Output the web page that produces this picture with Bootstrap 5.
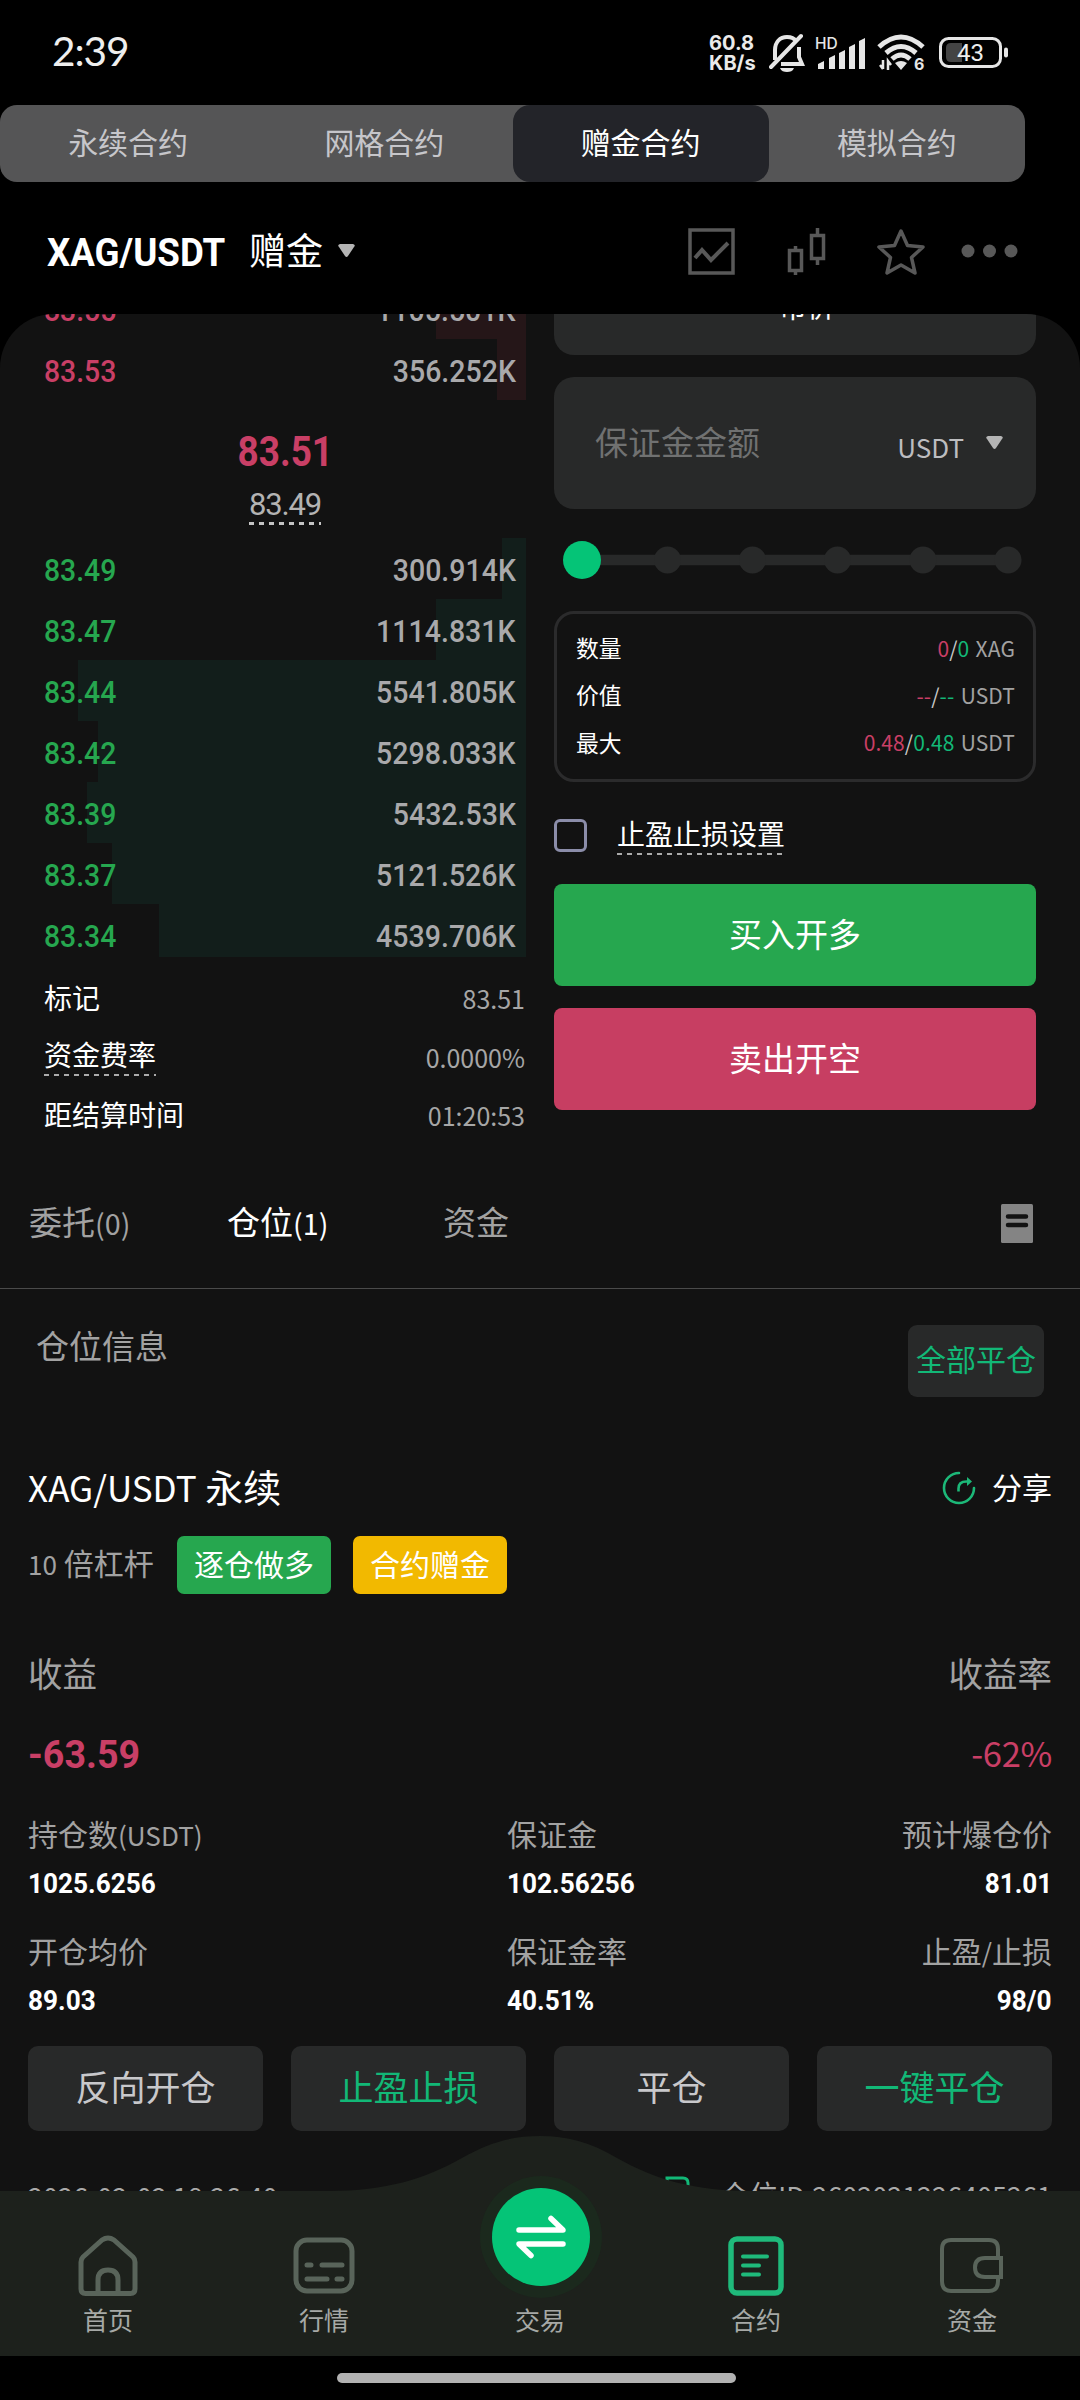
<!DOCTYPE html>
<html lang="zh-CN" data-bs-theme="dark">
<head>
<meta charset="utf-8">
<meta name="viewport" content="width=device-width, initial-scale=1">
<title>XAG/USDT 赠金合约</title>
<link href="https://cdn.jsdelivr.net/npm/bootstrap@5.3.0/dist/css/bootstrap.min.css" rel="stylesheet">
<style>
  :root{--up:#26a74f;--brand:#12b877;--down:#c93f66;--panel:#121212;--field:#282929;--muted:#a2a2a2}
  body{width:1080px;height:2400px;margin:0;background:#000;color:#fff;overflow:hidden;
    font-family:"Noto Sans CJK SC",sans-serif;line-height:1;position:relative}
  svg{display:block;flex:none}
  .din{font-family:Roboto,"Liberation Sans",sans-serif;display:inline-block}
  .lt{font-size:.87em}
  .t-up{color:var(--up)} .t-brand{color:var(--brand)} .t-down{color:var(--down)} .t-muted{color:var(--muted)}
  .statusbar{height:105px;padding:0 71px 0 52px}
  .clock{font:400 40.500px/1 Lato,sans-serif;color:#eee;letter-spacing:-1px;padding-bottom:2px}
  .rate{font:700 20px/20px Inter,sans-serif;color:#eaeaea;width:50px;margin-right:10px;white-space:nowrap}
  .seg{width:1025px;height:77px;border-radius:17px;background:#555556;overflow:hidden}
  .seg .nav-link{padding:0 0 6px;border-radius:17px;font-size:30px;color:#c6c6ca;height:77px;display:flex;align-items:center;justify-content:center}
  .seg .nav-link.active{background:#232429;color:#fff}
  .pairbar{height:132px;padding:6px 61px 0 47px}
  .pair{font-size:38px;font-weight:700;width:202px}
  .pair i{font-style:normal;transform:scaleX(.965);transform-origin:left}
  .kind{font-size:37px;width:77px;height:48px;line-height:45px}
  .main{height:2042px;background:var(--panel);border-radius:54px 54px 0 0;overflow:hidden}
  .book{width:482px;margin:-36px 0 0 44px}
  .lv{height:61px;padding:4px 10px 0 0;font-size:31px;font-weight:500;background:linear-gradient(var(--tint),var(--tint)) right/var(--w) 100% no-repeat}
  .lv.cut{height:53px;padding-top:13px}
  .ask{--tint:#251618} .bid{--tint:#121e1b}
  .lv .din{line-height:36px}
  .lv .din:first-child{transform:scaleX(.915);transform-origin:left}
  .lv .din:last-child{transform:scaleX(.92);transform-origin:right;color:#a9a9ab}
  .mid{height:138px;padding-top:31px}
  .last{font-size:42px;font-weight:700;line-height:42px;transform:scaleX(.88)}
  .markp{font-size:31px;line-height:31px;color:#b3b3b3;margin-top:16px;width:72px;height:36px;letter-spacing:-1.2px;
    background:repeating-linear-gradient(90deg,#c4c4c4 0 5px,transparent 5px 10px) bottom/100% 3px no-repeat}
  .stats{padding-top:11px}
  .stats>div{height:58.5px;font-size:28px;padding:0 1px 0 0}
  .stats b{font-weight:400;line-height:54px}
  .stats b.dash{line-height:44px;margin-top:-3px}
  .stats span{font-size:25px;color:#a6a6a6;margin-top:3px}
  .dash{background:repeating-linear-gradient(90deg,#aaa 0 5px,transparent 5px 10px) left bottom/100% 2px no-repeat}
  .order{width:482px;margin-left:28px}
  .field{background:var(--field);border-radius:20px}
  .f1{height:98px;margin-top:-57px;font-size:28px}
  .f2{height:132px;margin-top:22px;padding:0 33px 0 41px}
  .slide{margin:31px 0 31px 9px}
  .calc{height:171px;border:3px solid #2b2b2c;border-radius:20px;padding:11px 18px 0 19px}
  .calc>div{height:47.2px;font-size:22.800px}
  .calc b{font-weight:400}
  .calc span{font-size:21px;letter-spacing:.1px}
  .calc .val{color:#c9c9c9;word-spacing:1.500px}
  .calc .unit{color:#a2a2a2}
  .tp{height:102px;padding-top:4px}
  .box{width:33px;height:33px;border:3px solid #8b8da9;border-radius:6px}
  .tplabel{font-size:28px;width:166px;height:40px;line-height:37px;margin-left:30px;white-space:nowrap}
  .act{height:102px;border-radius:8px;border:0;color:#fff;font-size:33px;padding:0 0 4px;line-height:1}
  .buy{background:var(--up)} .sell{background:#c73e62;margin-top:22px}
  .tabs{height:130px;padding:0 47px 0 29px;border-bottom:1px solid #4a4a4a;margin-top:15px;font-size:33px;color:var(--muted)}
  .tabs div{padding-bottom:4px}
  .info{height:142px;padding:0 36px 0 36px}
  .closeall{width:136px;height:72px;margin-top:36px;border-radius:9px;background:var(--field);font-size:30px;padding-bottom:5px}
  .pos{padding:0 28px}
  .tag{height:58px;width:154px;border-radius:7px;font-size:30px;padding-bottom:4px;color:#fff}
  .metrics{height:117px}
  .cell.c1{width:479px} .cell.c2{width:265px} .cell.c3{flex:1}
  .cell div:first-child{font-size:30px;height:44px;line-height:44px;color:var(--muted)}
  .cell .num{display:block;width:max-content;font-size:28px;font-weight:700;line-height:44px;margin-top:7px;transform:scaleX(.935);transform-origin:left}
  .cell.c3 .num{margin-left:auto;transform-origin:right}
  .ops{gap:28px;margin-top:1px}
  .ops .btn{flex:1;height:85px;border:0;border-radius:10px;background:var(--field);font-size:35px;padding:0 0 6px;line-height:1;color:#c8c8cb}
  .ops .btn.g{color:var(--brand)}
  .meta{margin-top:48px;font-size:27px;color:#aaa;height:40px}
  .dock{position:absolute;left:0;top:2136px;width:1080px;height:264px}
  .dock .back{position:absolute;inset:0}
  .dockrow{position:relative;height:220px}
  .dockitem{width:216px;height:220px;display:flex;flex-direction:column;align-items:center;justify-content:flex-end;font-size:25px;color:#a6a9a6}
  .dockitem div{height:50px;line-height:26px}
  .bar{position:absolute;left:337px;top:237px;width:399px;height:10px;border-radius:5px;background:#b2b2b2}
</style>
<script src="https://cdn.jsdelivr.net/npm/bootstrap@5.3.0/dist/js/bootstrap.bundle.min.js"></script>
</head>
<body>
<div class="statusbar d-flex justify-content-between align-items-center">
  <div class="clock">2:39</div>
  <div class="d-flex align-items-center">
    <div class="rate"><div>60.8</div><div>KB/s</div></div>
    <svg width="36" height="40" viewBox="0 0 36 40" fill="none" stroke="#e6e6e6" stroke-width="4"><path d="M6 27V17C6 9 11 4 18 4c4 0 7 1 9 4M30 14v10l3 7H12"/><path d="M2 34L32 3" stroke-linecap="round"/><path d="M11 35h14c-1 3-4 4-7 4s-6-1-7-4z" fill="#e6e6e6" stroke="none"/></svg>
    <svg style="margin-left:10px" width="54" height="34" viewBox="0 0 54 34" fill="#e6e6e6"><text x="0" y="13" font-family="Inter" font-weight="500" font-size="15.500">HD</text><path d="M3 28l6-3v8H3zM14 22l6-3v14h-6zM24 17l6-3v19h-6zM34 11l6-3v25h-6zM44 5l6-3v31h-6z"/></svg>
    <svg style="margin-left:8px" width="48" height="38" viewBox="0 0 48 38" fill="none" stroke="#e6e6e6" stroke-width="5"><path d="M2 13Q24-7 46 13M9 19Q24 6 39 19M15 25Q24 17 33 25"/><path d="M18 29q6-4 12 0l-6 7z" fill="#e6e6e6" stroke="none"/><path d="M6 26v9M3 31l3 4M11 36V27l3 4" stroke-width="2.500"/><text x="37" y="36" font-family="Inter" font-weight="700" font-size="16" fill="#e6e6e6" stroke="none">6</text></svg>
    <svg style="margin-left:14px" width="70" height="32" viewBox="0 0 70 32"><rect x="1.500" y="1.500" width="60" height="28" rx="8" fill="none" stroke="#e6e6e6" stroke-width="3"/><path d="M12 6h11v19H12q-5 0-5-5v-9q0-5 5-5z" fill="#444"/><rect x="65" y="10.500" width="4" height="10" rx="2" fill="#e6e6e6"/><text x="18" y="24" font-family="Roboto" font-weight="400" font-size="24" fill="#eee">43</text></svg>
  </div>
</div>

<nav class="seg nav nav-pills nav-fill flex-nowrap">
  <a class="nav-link nav-item w-25">永续合约</a><a class="nav-link nav-item w-25">网格合约</a><a class="nav-link nav-item w-25 active">赠金合约</a><a class="nav-link nav-item w-25">模拟合约</a>
</nav>

<div class="pairbar d-flex align-items-center">
  <div class="pair"><i class="din">XAG/USDT</i></div>
  <div class="kind">赠金</div>
  <svg style="margin-left:12px" width="17" height="14" viewBox="0 0 17 14"><path d="M2 0h13q3 1 1 3L10 12q-1.500 2-3 0L1 3Q-1 1 2 0z" fill="#b4b4b4"/></svg>
  <div class="d-flex align-items-center ms-auto">
    <svg width="47" height="47" viewBox="0 0 47 47" fill="none" stroke="#585858" stroke-width="3.500"><path d="M2 2h43v43H2z"/><path d="M7 30l7-8 9 10 17-17" stroke-width="4"/></svg>
    <svg style="margin-left:52px" width="39" height="47" viewBox="0 0 39 47" fill="none" stroke="#585858" stroke-width="3.500"><path d="M2.500 22.500h12v20h-12zM8.500 18v4M8.500 43v4M24.500 7.500h12v23h-12zM30.500 0v7M30.500 31v6"/></svg>
    <svg style="margin-left:51px" width="48" height="47" viewBox="0 0 48 47" fill="none" stroke="#585858" stroke-width="3.500" stroke-linejoin="round"><path d="M24 3l6.500 14.500L46 19 34.500 29.500 38 45 24 37 10 45l3.500-15.500L2 19l15.500-1.500z"/></svg>
    <svg style="margin-left:36px" width="58" height="14" viewBox="0 0 58 14" fill="#585858"><circle cx="7" cy="7" r="6.500"/><circle cx="28.500" cy="7" r="6.500"/><circle cx="50" cy="7" r="6.500"/></svg>
  </div>
</div>

<main class="main">
  <div class="d-flex">
    <section class="book">
      <div class="lv ask d-flex justify-content-between align-items-center" style="--w:90px"><span class="din t-down">83.55</span><span class="din">1105.501K</span></div>
      <div class="lv ask d-flex justify-content-between align-items-center" style="--w:29px"><span class="din t-down">83.53</span><span class="din">356.252K</span></div>
      <div class="mid d-flex flex-column align-items-center">
        <div class="last din t-down">83.51</div>
        <div class="markp din">83.49</div>
      </div>
      <div class="lv bid d-flex justify-content-between align-items-center" style="--w:24px"><span class="din t-up">83.49</span><span class="din">300.914K</span></div>
      <div class="lv bid d-flex justify-content-between align-items-center" style="--w:90px"><span class="din t-up">83.47</span><span class="din">1114.831K</span></div>
      <div class="lv bid d-flex justify-content-between align-items-center" style="--w:448px"><span class="din t-up">83.44</span><span class="din">5541.805K</span></div>
      <div class="lv bid d-flex justify-content-between align-items-center" style="--w:428px"><span class="din t-up">83.42</span><span class="din">5298.033K</span></div>
      <div class="lv bid d-flex justify-content-between align-items-center" style="--w:439px"><span class="din t-up">83.39</span><span class="din">5432.53K</span></div>
      <div class="lv bid d-flex justify-content-between align-items-center" style="--w:414px"><span class="din t-up">83.37</span><span class="din">5121.526K</span></div>
      <div class="lv bid cut d-flex justify-content-between align-items-center" style="--w:367px"><span class="din t-up">83.34</span><span class="din">4539.706K</span></div>
      <div class="stats">
        <div class="d-flex justify-content-between align-items-center"><b>标记</b><span>83.51</span></div>
        <div class="d-flex justify-content-between align-items-center"><b class="dash">资金费率</b><span>0.0000%</span></div>
        <div class="d-flex justify-content-between align-items-center"><b>距结算时间</b><span>01:20:53</span></div>
      </div>
    </section>

    <section class="order">
      <div class="field f1 d-flex align-items-center justify-content-center ps-4">市价</div>
      <div class="field f2 d-flex align-items-center">
        <div style="font-size:33px;color:#707171;padding-bottom:3px">保证金金额</div>
        <div class="ms-auto" style="font-size:26px;color:#bdbdc0;padding-top:7px">USDT</div>
        <svg style="margin-left:22px" width="17" height="14" viewBox="0 0 17 14"><path d="M2 0h13q3 1 1 3L10 12q-1.500 2-3 0L1 3Q-1 1 2 0z" fill="#b4b4b4"/></svg>
      </div>
      <svg class="slide" width="464" height="40" viewBox="0 0 464 40"><path d="M19 20H445" stroke="#282929" stroke-width="10.500"/><g fill="#282929"><circle cx="104.500" cy="20" r="13.500"/><circle cx="189.500" cy="20" r="13.500"/><circle cx="274.500" cy="20" r="13.500"/><circle cx="360" cy="20" r="13.500"/><circle cx="445" cy="20" r="13.500"/></g><circle cx="19" cy="20" r="19" fill="#05c477"/></svg>
      <div class="calc">
        <div class="d-flex justify-content-between align-items-center"><b>数量</b><span class="val"><span class="t-down">0</span>/<span class="t-brand">0</span> <span class="unit">XAG</span></span></div>
        <div class="d-flex justify-content-between align-items-center"><b>价值</b><span class="val"><span class="t-down">--</span>/<span class="t-brand">--</span> <span class="unit">USDT</span></span></div>
        <div class="d-flex justify-content-between align-items-center"><b>最大</b><span class="val"><span class="t-down">0.48</span>/<span class="t-brand">0.48</span> <span class="unit">USDT</span></span></div>
      </div>
      <div class="tp d-flex align-items-center"><div class="box"></div><div class="tplabel dash">止盈止损设置</div></div>
      <button class="btn act buy w-100 d-block">买入开多</button>
      <button class="btn act sell w-100 d-block">卖出开空</button>
    </section>
  </div>

  <div class="tabs d-flex align-items-center">
    <div style="width:198px">委托<span class="lt">(0)</span></div>
    <div class="text-white" style="width:216px">仓位<span class="lt">(1)</span></div>
    <div>资金</div>
    <svg class="ms-auto" width="32" height="39" viewBox="0 0 32 39"><rect width="32" height="39" rx="1.500" fill="#848484"/><path d="M7 12.500h18M7 21h18" stroke="#121212" stroke-width="4.500" stroke-linecap="round"/></svg>
  </div>

  <div class="info d-flex justify-content-between">
    <div class="t-muted" style="font-size:33px;padding-top:40px">仓位信息</div>
    <div class="closeall t-brand d-flex align-items-center justify-content-center">全部平仓</div>
  </div>

  <section class="pos">
    <div class="d-flex align-items-center" style="height:105px;padding-top:10px">
      <div style="font-size:38px;padding-bottom:4px"><span style="font-size:35px">XAG/USDT</span> 永续</div>
      <svg class="ms-auto" width="34" height="34" viewBox="0 0 34 34" fill="none" stroke="#1cb878" stroke-width="2.600"><path d="M17 2A15 15 0 1 0 32 17" stroke-linecap="round"/><path d="M16.500 20.500v-3q0-7 8-7h2"/><path d="M25 6l5 4.500-5 4.500z" fill="#1cb878" stroke="none"/></svg>
      <div style="font-size:30px;margin-left:16px;padding-bottom:4px">分享</div>
    </div>
    <div class="d-flex align-items-center" style="height:58px">
      <div class="t-muted" style="font-size:30px;padding-bottom:4px;width:149px"><span class="lt">10</span> 倍杠杆</div>
      <div class="tag d-flex align-items-center justify-content-center" style="background:var(--up)">逐仓做多</div>
      <div class="tag d-flex align-items-center justify-content-center" style="background:#f2b900;margin-left:22px">合约赠金</div>
    </div>
    <div class="d-flex justify-content-between t-muted" style="font-size:34.500px;padding-top:61px"><div>收益</div><div>收益率</div></div>
    <div class="d-flex justify-content-between align-items-center t-down" style="height:60px;margin-top:36px">
      <div class="din" style="font-size:39px;font-weight:700;transform:scaleX(.965);transform-origin:left">-63.59</div>
      <div style="font-size:34.500px;letter-spacing:-.3px;padding-bottom:5px">-62%</div>
    </div>
    <div class="metrics d-flex" style="margin-top:26px">
      <div class="cell c1"><div>持仓数<span class="lt">(USDT)</span></div><div class="num din">1025.6256</div></div>
      <div class="cell c2"><div>保证金</div><div class="num din">102.56256</div></div>
      <div class="cell c3 text-end"><div>预计爆仓价</div><div class="num din">81.01</div></div>
    </div>
    <div class="metrics d-flex">
      <div class="cell c1"><div>开仓均价</div><div class="num din">89.03</div></div>
      <div class="cell c2"><div>保证金率</div><div class="num din">40.51%</div></div>
      <div class="cell c3 text-end"><div>止盈<span class="lt">/</span>止损</div><div class="num din">98/0</div></div>
    </div>
    <div class="ops d-flex">
      <button class="btn">反向开仓</button><button class="btn g">止盈止损</button><button class="btn">平仓</button><button class="btn g">一键平仓</button>
    </div>
    <div class="meta d-flex">
      <div style="padding-top:4px">2026-02-02 18:26:40</div>
      <svg class="ms-auto" style="margin-top:-3px" width="26" height="30" viewBox="0 0 26 30" fill="none" stroke="#12b877" stroke-width="3"><path d="M2 2h16q5 0 5 5v20H2z"/></svg>
      <div style="margin-left:29px;padding-top:1px"><span style="font-size:29px">仓位</span>ID:2602021226405261</div>
    </div>
  </section>
</main>

<footer class="dock">
  <svg class="back" width="1080" height="264" viewBox="0 0 1080 264"><path d="M0 220h1080v44H0z" fill="#000"/><path d="M0 55H330C385 55 425 43 462 22 490 6 513 0 540 0s50 6 77 22C654 43 694 55 750 55H1080V220H0z" fill="#1d211c"/></svg>
  <div class="dockrow d-flex">
    <div class="dockitem"><svg style="margin-bottom:9px" width="62" height="62" viewBox="0 0 62 62" fill="none" stroke="#59645a" stroke-width="5" stroke-linejoin="round"><path d="M4 27Q4 24 6 22L25 5q6-4 12 0L56 22q2 2 2 5V54q0 4.500-4.500 4.500H8.500Q4 58.500 4 54z"/><path d="M21 58V45q0-10 10-10t10 10v13"/></svg><div>首页</div></div>
    <div class="dockitem"><svg style="margin-bottom:10px" width="62" height="60" viewBox="0 0 62 60" fill="none" stroke="#59645a" stroke-width="5" stroke-linecap="round"><rect x="3" y="4" width="56" height="51" rx="11"/><path d="M14 29h4M29 29h20M14 43h20M44 43h5"/></svg><div>行情</div></div>
    <div class="dockitem"><svg style="margin-bottom:7px" width="124" height="124" viewBox="0 0 124 124"><circle cx="63" cy="62" r="61" fill="#1b291d"/><circle cx="63" cy="62" r="49" fill="#05c477"/><path d="M41 55h44L73 43.500M85 69H41l12 11.500" fill="none" stroke="#fff" stroke-width="5.500" stroke-linecap="round" stroke-linejoin="round"/></svg><div>交易</div></div>
    <div class="dockitem t-brand"><svg style="margin-bottom:10px" width="56" height="60" viewBox="0 0 56 60" fill="none" stroke="#1fba7b" stroke-width="5.500" stroke-linecap="round"><rect x="3" y="3" width="50" height="54" rx="6"/><path d="M15 20.500h24M15 29.500h16M15 38.500h16" stroke-width="4"/></svg><div>合约</div></div>
    <div class="dockitem"><svg style="margin:0 2px 10px 0" width="64" height="60" viewBox="0 0 64 60" fill="none" stroke="#59645a" stroke-width="4"><path d="M59 21V13Q59 4 50 4H12Q3 4 3 13V45q0 10 9 10H50q9 0 9-10V41"/><path d="M62 22H46q-10 0-10 9.500T46 41H62z"/></svg><div>资金</div></div>
  </div>
  <div class="bar"></div>
</footer>
</body>
</html>
